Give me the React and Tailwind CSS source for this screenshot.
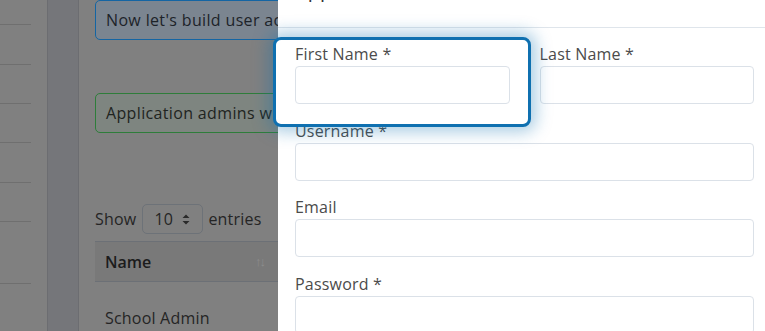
export default function App() {
  const menuRows = [25, 40, 39, 39, 40, 39, 62];
  const Field = ({ label, className = "" }) => (
    <div className={className}>
      <div className="h-[21px] text-[16px] leading-[25px] tracking-[0.2px] text-[#4b4b4b] whitespace-nowrap">{label}</div>
      <div className="mt-[3px] h-[38px] rounded-[4px] border border-[#dbe1e8] bg-white" />
    </div>
  );
  return (
    <div className="relative w-[765px] h-[331px] overflow-hidden bg-[#808080] font-['Open_Sans',sans-serif]">
      {/* dimmed page underneath */}
      <div className="flex h-full">
        <aside className="w-[47px] flex flex-col shrink-0">
          {menuRows.map((h, i) => (
            <div key={i} className="w-[31px] border-b border-[#6f6f6f] shrink-0" style={{ height: h }} />
          ))}
        </aside>
        <div className="w-[32px] shrink-0 bg-[#75767a] border-x border-[#6c6d71]" />
        <main className="flex-1 pl-[16px] min-w-0">
          <div className="h-[40px] w-[600px] rounded-[5px] border border-[#1465a3] bg-[#7b8590] px-[10px] flex items-center text-[16px] tracking-[0.35px] text-[#1d2329] whitespace-nowrap">
            Now let's build user accounts for your school
          </div>
          <div className="mt-[53px] h-[40px] w-[600px] rounded-[5px] border border-[#2e7d3a] bg-[#7e8580] px-[10px] flex items-center text-[16px] tracking-[0.35px] text-[#1f2420] whitespace-nowrap">
            Application admins will manage the school
          </div>
          <div className="mt-[71px] h-[30px] flex items-center text-[16px] tracking-[0.2px] text-[#252525]">
            <span>Show</span>
            <div className="ml-[6px] w-[61px] h-[30px] rounded-[5px] border border-[#6d7278] flex items-center pl-[11px] pr-[12px] justify-between">
              <span>10</span>
              <svg width="8" height="11" viewBox="0 0 8 11">
                <path d="M4 0.5 L7.5 4 L0.5 4 Z M4 10.5 L7.5 7 L0.5 7 Z" fill="#2a2a2a" />
              </svg>
            </div>
            <span className="ml-[5px]">entries</span>
          </div>
          <div className="mt-[7px] h-[41px] border-y border-[#6c7076] bg-[#797979] flex items-center">
            <div className="w-[183px] pl-[10px] pr-[14px] flex items-center justify-between">
              <span className="font-semibold text-[16px] text-[#1c1c1c]">Name</span>
              <span className="text-[13px] text-[#8d8d8d] tracking-[-2px]">↑↓</span>
            </div>
          </div>
          <div className="pt-[24px] pl-[10px] text-[16px] tracking-[0.2px] text-[#252525]">School Admin</div>
        </main>
      </div>

      {/* drawer */}
      <div className="absolute top-0 left-[278px] right-0 h-full bg-white">
        <div className="h-[28px] border-b border-[#dfe5eb] flex justify-between pl-[17px] pr-[10px] overflow-hidden">
          <span className="text-[20px] leading-[24px] -mt-[22px] text-[#333]">Application Admin</span>
          <span className="text-[26px] leading-[26px] -mt-[24px] text-[#b0b6bd]">×</span>
        </div>
        <div className="pt-[14px] pl-[17px] pr-[11px]">
          <div className="grid grid-cols-2 gap-x-[30px]">
            <Field label="First Name *" className="relative z-30" />
            <Field label="Last Name *" />
          </div>
          <Field label="Username *" className="mt-[15px]" />
          <Field label="Email" className="mt-[14px]" />
          <Field label="Password *" className="mt-[15px]" />
        </div>
      </div>

      {/* tour highlight */}
      <div className="absolute z-20 left-[273px] top-[37px] w-[258px] h-[90px] rounded-[8px] border-[3px] border-[#0f70b0] bg-white shadow-[0_0_16px_5px_rgba(15,112,176,0.35)] pointer-events-none" />
    </div>
  );
}
